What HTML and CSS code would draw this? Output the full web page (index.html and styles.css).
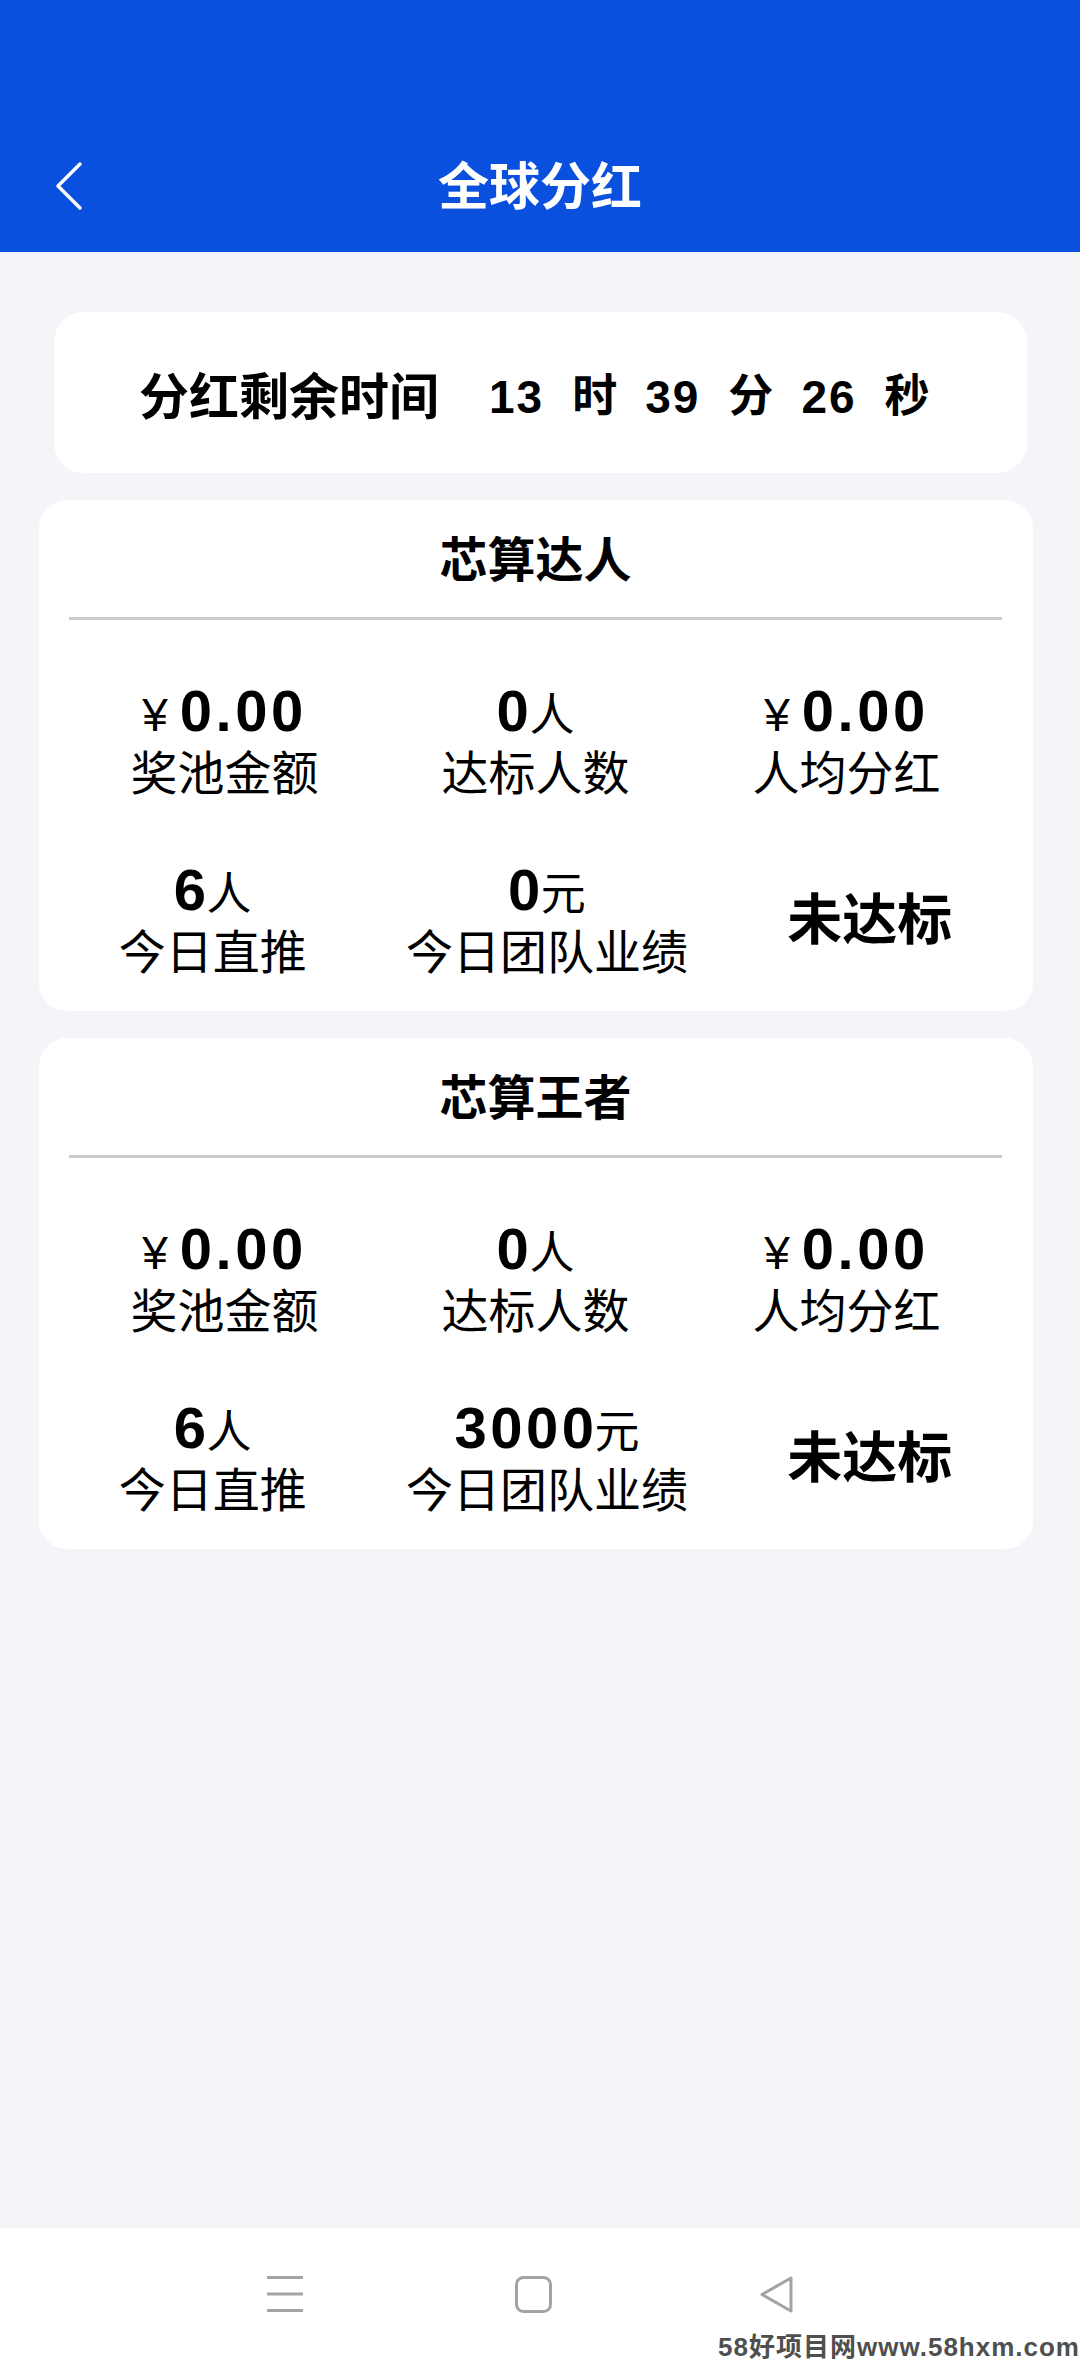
FILE: index.html
```html
<!DOCTYPE html>
<html lang="zh-CN">

<head>
    <meta charset="UTF-8">
    <meta name="viewport" content="width=device-width, initial-scale=1.0">
    <title>全球分红</title>
    <link rel="stylesheet" href="styles.css">
</head>

<body>
    <div class="app">
        <header class="topbar">
            <div class="nav">
                <a class="back" href="#">
                    <svg width="40" height="60" viewBox="0 0 40 60">
                        <polyline points="30,8 8,30 30,52" fill="none" stroke="#fff" stroke-width="3.5"
                            stroke-linecap="round" stroke-linejoin="round" />
                    </svg>
                </a>
                <h1>全球分红</h1>
            </div>
        </header>

        <main class="content">
            <div class="timer">
                <span class="timer-label">分红剩余时间</span>
                <span class="num first">13</span><span class="tunit">时</span>
                <span class="num">39</span><span class="tunit">分</span>
                <span class="num">26</span><span class="tunit">秒</span>
            </div>

            <section class="card">
                <div class="card-title">芯算达人</div>
                <div class="stats">
                    <div class="stat">
                        <div class="val"><span class="yen">¥</span>0.00</div>
                        <div class="label">奖池金额</div>
                    </div>
                    <div class="stat">
                        <div class="val">0<span class="unit">人</span></div>
                        <div class="label">达标人数</div>
                    </div>
                    <div class="stat">
                        <div class="val"><span class="yen">¥</span>0.00</div>
                        <div class="label">人均分红</div>
                    </div>
                </div>
                <div class="stats">
                    <div class="stat">
                        <div class="val">6<span class="unit">人</span></div>
                        <div class="label">今日直推</div>
                    </div>
                    <div class="stat">
                        <div class="val">0<span class="unit">元</span></div>
                        <div class="label">今日团队业绩</div>
                    </div>
                    <div class="status">未达标</div>
                </div>
            </section>

            <section class="card">
                <div class="card-title">芯算王者</div>
                <div class="stats">
                    <div class="stat">
                        <div class="val"><span class="yen">¥</span>0.00</div>
                        <div class="label">奖池金额</div>
                    </div>
                    <div class="stat">
                        <div class="val">0<span class="unit">人</span></div>
                        <div class="label">达标人数</div>
                    </div>
                    <div class="stat">
                        <div class="val"><span class="yen">¥</span>0.00</div>
                        <div class="label">人均分红</div>
                    </div>
                </div>
                <div class="stats">
                    <div class="stat">
                        <div class="val">6<span class="unit">人</span></div>
                        <div class="label">今日直推</div>
                    </div>
                    <div class="stat">
                        <div class="val">3000<span class="unit">元</span></div>
                        <div class="label">今日团队业绩</div>
                    </div>
                    <div class="status">未达标</div>
                </div>
            </section>
        </main>

        <footer class="sysbar">
            <svg class="sys-menu" width="36" height="36" viewBox="0 0 36 36">
                <line x1="0" y1="1.5" x2="36" y2="1.5" stroke="#a3a3a3" stroke-width="3" />
                <line x1="0" y1="18" x2="36" y2="18" stroke="#a3a3a3" stroke-width="3" />
                <line x1="0" y1="34.5" x2="36" y2="34.5" stroke="#a3a3a3" stroke-width="3" />
            </svg>
            <svg class="sys-home" width="37" height="37" viewBox="0 0 37 37">
                <rect x="1.5" y="1.5" width="34" height="34" rx="7" fill="none" stroke="#a3a3a3" stroke-width="3" />
            </svg>
            <svg class="sys-back" width="36" height="37" viewBox="0 0 36 37">
                <path d="M32 2 L32 35 L3 18.5 Z" fill="none" stroke="#a3a3a3" stroke-width="3"
                    stroke-linejoin="round" />
            </svg>
        </footer>

        <div class="watermark">58好项目网www.58hxm.com</div>
    </div>
</body>

</html>
```

FILE: styles.css
```css
body {
    margin: 0;
    font-family: "Liberation Sans", "Noto Sans CJK SC", sans-serif;
    color: #000;
    background: #f4f5f9;
}

.app {
    position: relative;
    height: 2362px;
    display: flex;
    flex-direction: column;
}

.topbar {
    height: 252px;
    background: #0950de;
    display: flex;
    align-items: flex-end;
}

.nav {
    position: relative;
    width: 100%;
    height: 132px;
    display: flex;
    align-items: center;
    justify-content: center;
}

.back {
    position: absolute;
    left: 50px;
    top: 36px;
    display: block;
}

.nav h1 {
    margin: 0 0 6px;
    color: #fff;
    font-family: "Noto Sans CJK SC", sans-serif;
    font-size: 51px;
    font-weight: 700;
    line-height: 60px;
}

.content {
    flex: 1;
    padding: 60px 47px 0 39px;
}

.timer {
    height: 161px;
    margin: 0 6px 27px 15px;
    padding-left: 85px;
    background: #fff;
    border-radius: 30px;
    display: flex;
    align-items: center;
    font-weight: 700;
}

.timer-label,
.tunit {
    font-family: "Noto Sans CJK SC", sans-serif;
}

.timer-label {
    font-size: 50px;
    line-height: 60px;
}

.num {
    font-size: 46px;
    letter-spacing: 2px;
    margin-left: 28px;
    line-height: 60px;
    position: relative;
    top: 4px;
}

.num.first {
    margin-left: 50px;
}

.tunit {
    font-size: 45px;
    margin-left: 28px;
    line-height: 60px;
}

.card {
    background: #fff;
    border-radius: 28px;
    padding: 0 31px 33px 30px;
    margin-bottom: 27px;
}

.card-title {
    height: 111px;
    padding-bottom: 6px;
    border-bottom: 3px solid #cbcbcb;
    display: flex;
    align-items: center;
    justify-content: center;
    font-family: "Noto Sans CJK SC", sans-serif;
    font-size: 48px;
    font-weight: 700;
}

.stats {
    display: flex;
    justify-content: space-around;
    align-items: center;
    margin-top: 61px;
}

.stat {
    text-align: center;
}

.val {
    height: 60px;
    font-size: 58px;
    font-weight: 700;
    letter-spacing: 3.5px;
    line-height: 60px;
    white-space: nowrap;
}

.yen,
.unit {
    font-weight: 400;
    letter-spacing: 0;
    line-height: 1;
}

.yen {
    font-size: 46px;
    margin-right: 12px;
}

.unit {
    font-family: "Noto Sans CJK SC", sans-serif;
    font-size: 45px;
    margin-left: -3px;
}

.label {
    height: 58px;
    font-family: "Noto Sans CJK SC", sans-serif;
    font-size: 47px;
    line-height: 58px;
    white-space: nowrap;
}

.status {
    font-family: "Noto Sans CJK SC", sans-serif;
    font-size: 55px;
    font-weight: 700;
    line-height: 64px;
    padding-bottom: 8px;
}

.sysbar {
    height: 134px;
    background: #fff;
    display: flex;
    align-items: center;
    padding-left: 267px;
    padding-bottom: 2px;
    box-sizing: border-box;
}

.sys-home {
    margin-left: 212px;
}

.sys-back {
    margin-left: 207px;
}

.watermark {
    position: absolute;
    right: 0;
    bottom: 1px;
    color: #4f4f4f;
    font-family: "Liberation Sans", "Noto Sans CJK SC", sans-serif;
    font-size: 26px;
    font-weight: 700;
    letter-spacing: 1px;
    line-height: 28px;
}
```
